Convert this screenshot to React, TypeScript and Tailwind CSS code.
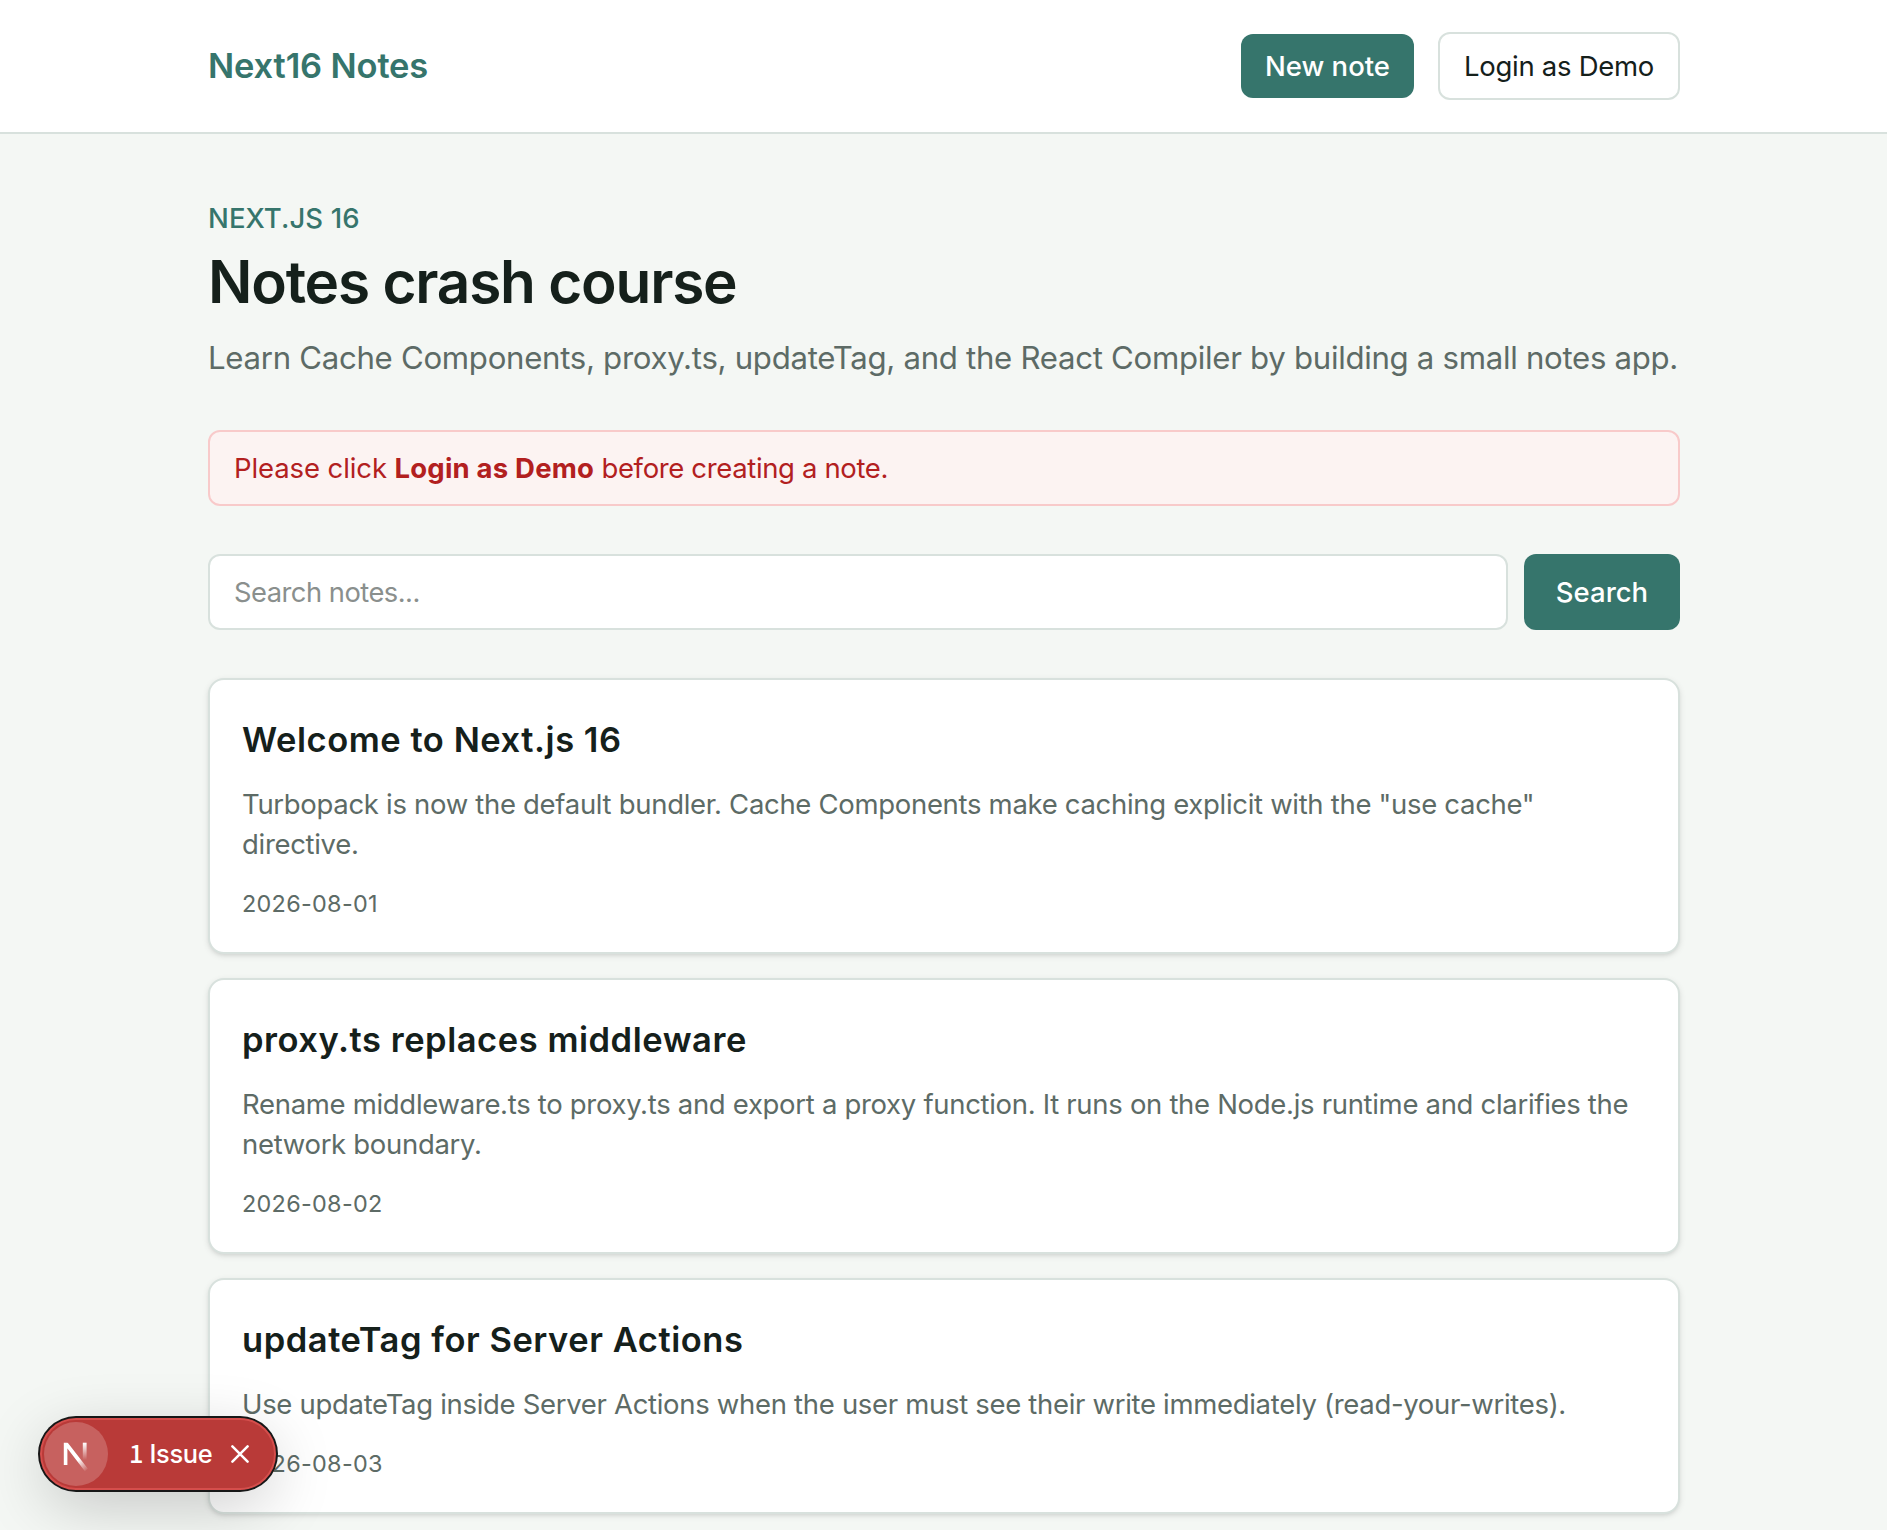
import clsx from 'clsx';

interface Note {
  id: string;
  title: string;
  body: string;
  date: string;
}

const notes: Note[] = [
  {
    id: '1',
    title: 'Welcome to Next.js 16',
    body: 'Turbopack is now the default bundler. Cache Components make caching explicit with the "use cache" directive.',
    date: '2026-08-01',
  },
  {
    id: '2',
    title: 'proxy.ts replaces middleware',
    body: 'Rename middleware.ts to proxy.ts and export a proxy function. It runs on the Node.js runtime and clarifies the network boundary.',
    date: '2026-08-02',
  },
  {
    id: '3',
    title: 'updateTag for Server Actions',
    body: 'Use updateTag inside Server Actions when the user must see their write immediately (read-your-writes).',
    date: '2026-08-03',
  },
];

const body = 'text-[27.5px] leading-10';

function Header() {
  return (
    <header className="border-b-2 border-[#d8e1dd] bg-white">
      <div className="mx-auto flex w-[1472px] items-center justify-between py-8">
        <a className="text-[34.5px] leading-[56px] font-semibold tracking-[-0.15px] text-[#36756c]">Next16 Notes</a>
        <nav className="flex items-center gap-6">
          <a className={clsx(body, 'w-[173px] rounded-xl bg-[#36756c] py-3 text-center font-medium text-white')}>
            New note
          </a>
          <button
            className={clsx(
              body,
              'w-[242px] rounded-xl border-2 border-[#d8e1dd] py-3 tracking-[-0.3px] text-[#15201b]',
            )}
          >
            Login as Demo
          </button>
        </nav>
      </div>
    </header>
  );
}

function NoteCard({ note }: { note: Note }) {
  return (
    <li className="rounded-2xl border-2 border-[#d8e1dd] bg-white p-8 shadow-[0_2px_6px_rgba(0,0,0,0.1),0_2px_4px_-2px_rgba(0,0,0,0.1)]">
      <h2 className="text-[34.5px] leading-[56px] font-semibold tracking-[0.54px] text-[#15201b]">{note.title}</h2>
      <p className={clsx(body, 'mt-4 tracking-[-0.31px] text-[#5d6b66]')}>{note.body}</p>
      <p className="mt-6 text-[23.4px] leading-8 tracking-[0.3px] text-[#5d6b66]">{note.date}</p>
    </li>
  );
}

function NextMark() {
  return (
    <svg viewBox="0 0 64 64" className="size-16" fill="none">
      <defs>
        <linearGradient id="diag" x1="34" y1="38" x2="43" y2="49" gradientUnits="userSpaceOnUse">
          <stop stopColor="#fff" />
          <stop offset="1" stopColor="#fff" stopOpacity="0" />
        </linearGradient>
        <linearGradient id="stem" x1="0" y1="21" x2="0" y2="38" gradientUnits="userSpaceOnUse">
          <stop stopColor="#fff" />
          <stop offset="1" stopColor="#fff" stopOpacity="0" />
        </linearGradient>
        <clipPath id="top">
          <rect x="19.5" y="20.7" width="30" height="30" />
        </clipPath>
      </defs>
      <path d="M42.4 48 L21.5 20.9 V43" stroke="url(#diag)" strokeWidth="3.8" clipPath="url(#top)" />
      <rect x="38.8" y="20.7" width="3.8" height="17.3" fill="url(#stem)" />
    </svg>
  );
}

function IssueBadge() {
  return (
    <div className="absolute top-[1418px] left-10 flex h-[72px] w-[236px] items-center rounded-full border-2 border-[#d54e4c] bg-[#b93a38] pl-0.5 text-white shadow-[0_0_0_2px_#171717,0_16px_64px_-4px_rgba(0,0,0,0.22)]">
      <div className="size-16 rounded-full bg-white/20">
        <NextMark />
      </div>
      <span className="-mt-0.5 ml-[21px] w-[83px] text-[25.4px] leading-8 font-medium tracking-[-0.35px] whitespace-nowrap">
        <span className="font-['Noto_Sans_CJK_SC',sans-serif]">1</span> Issue
      </span>
      <svg viewBox="0 0 18 18" className="ml-[19px] size-[18px]" fill="none" stroke="#fff" strokeWidth="2.5" strokeLinecap="round">
        <path d="M1.4 1.4 L16.6 16.6 M16.6 1.4 L1.4 16.6" />
      </svg>
    </div>
  );
}

export default function App() {
  return (
    <div className="relative h-[1530px] w-[1888px] overflow-hidden bg-[#f4f7f4] font-['Inter',sans-serif] text-[#15201b]">
      <Header />
      <main className="mx-auto w-[1472px] py-16">
        <p className={clsx(body, 'font-medium tracking-[0.1px] text-[#36756c]')}>NEXT.JS 16</p>
        <h1 className="mt-2 text-[58.5px] leading-[72px] font-semibold tracking-[-1.2px]">Notes crash course</h1>
        <p className="mt-4 text-[31.2px] leading-[48px] tracking-[-0.3px] whitespace-nowrap text-[#5d6b66]">
          Learn Cache Components, proxy.ts, updateTag, and the React Compiler by building a small notes app.
        </p>

        <div className={clsx(body, 'mt-12 rounded-xl border-2 border-[#f8caca] bg-[#fcf3f2] px-6 py-4 text-[#b2201f]')}>
          <span className="tracking-[-0.1px]">Please click </span>
          <strong className="tracking-[0.2px]">Login as Demo</strong>
          <span className="tracking-[-0.36px]"> before creating a note.</span>
        </div>

        <form className="mt-12 flex gap-4">
          <input
            type="search"
            placeholder="Search notes..."
            className="h-[76px] flex-1 rounded-xl border-2 border-[#d8e1dd] bg-white px-6 text-[27.3px] tracking-[-0.5px] placeholder:text-[#8a8f8d]"
          />
          <button type="button" className={clsx(body, 'w-[156px] rounded-xl bg-[#36756c] font-medium text-white')}>
            Search
          </button>
        </form>

        <ul className="mt-12 space-y-6">
          {notes.map((note) => (
            <NoteCard key={note.id} note={note} />
          ))}
        </ul>
      </main>
      <IssueBadge />
    </div>
  );
}
